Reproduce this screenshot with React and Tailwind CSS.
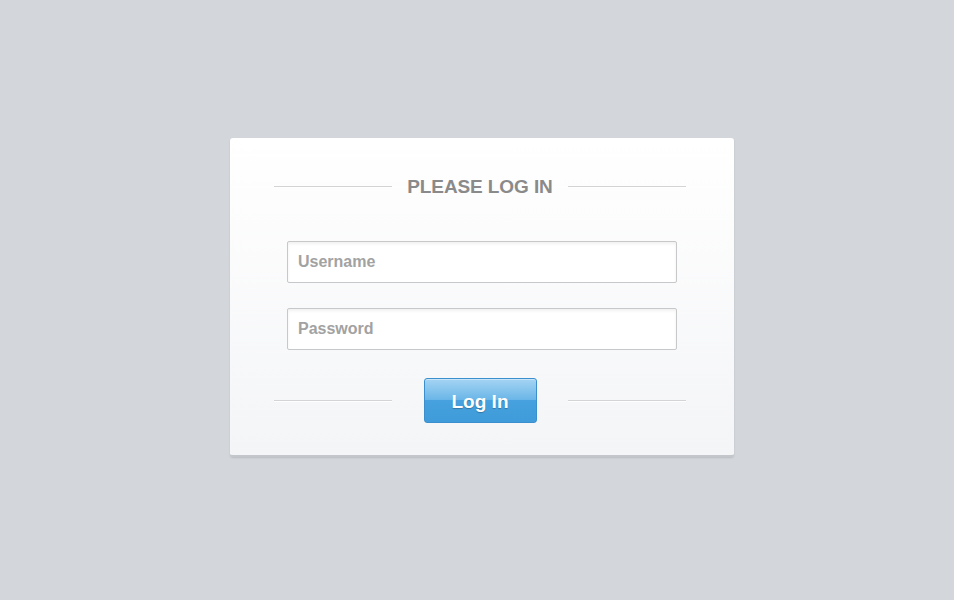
import React from 'react';

function Rule() {
    return <div className="h-[2px] w-[118px] bg-[#d2d4d6] border-b border-white"></div>;
}

export default function App() {
    return (
        <div className="min-h-screen w-full bg-[#d3d7db] pt-[138px] pl-[10px] flex justify-center" style={{ fontFamily: '"Liberation Sans", Arial, sans-serif' }}>
            <div className="w-[504px] h-[319px] rounded-[3px] bg-gradient-to-b from-white to-[#f4f5f7] border-b-2 border-[#c3c7cb] shadow-[0_1px_2px_rgba(0,0,0,0.12)]">
                {/* Header */}
                <div className="pt-[39px] pl-[44px] pr-[48px] flex items-center justify-between">
                    <Rule />
                    <h1 className="text-[19px] leading-[20px] font-bold text-[#8a8a8a] tracking-[-0.1px]">PLEASE LOG IN</h1>
                    <Rule />
                </div>

                {/* Fields */}
                <div className="mt-[44px] flex flex-col items-center gap-[25px]">
                    <input
                        type="text"
                        placeholder="Username"
                        className="w-[390px] h-[42px] rounded-[2px] border border-[#c6c8ca] bg-white px-[10px] text-[16px] font-bold text-[#666] placeholder:text-[#a2a2a2] shadow-[inset_0_2px_3px_rgba(0,0,0,0.06)] outline-none"
                    />
                    <input
                        type="password"
                        placeholder="Password"
                        className="w-[390px] h-[42px] rounded-[2px] border border-[#c6c8ca] bg-white px-[10px] text-[16px] font-bold text-[#666] placeholder:text-[#a2a2a2] shadow-[inset_0_2px_3px_rgba(0,0,0,0.06)] outline-none"
                    />
                </div>

                {/* Action */}
                <div className="mt-[28px] pl-[44px] pr-[48px] flex items-center justify-between">
                    <Rule />
                    <button className="w-[113px] h-[45px] rounded-[3px] border border-[#3a8fcc] bg-[linear-gradient(to_bottom,#a5d4f3_0%,#6ab6e8_48%,#46a1de_50%,#3f9bd9_100%)] text-white text-[19px] font-bold leading-none pt-[2px] [text-shadow:0_1px_1px_rgba(0,0,0,0.25)] shadow-[inset_0_1px_0_rgba(255,255,255,0.4)]">
                        Log In
                    </button>
                    <Rule />
                </div>
            </div>
        </div>
    );
}
